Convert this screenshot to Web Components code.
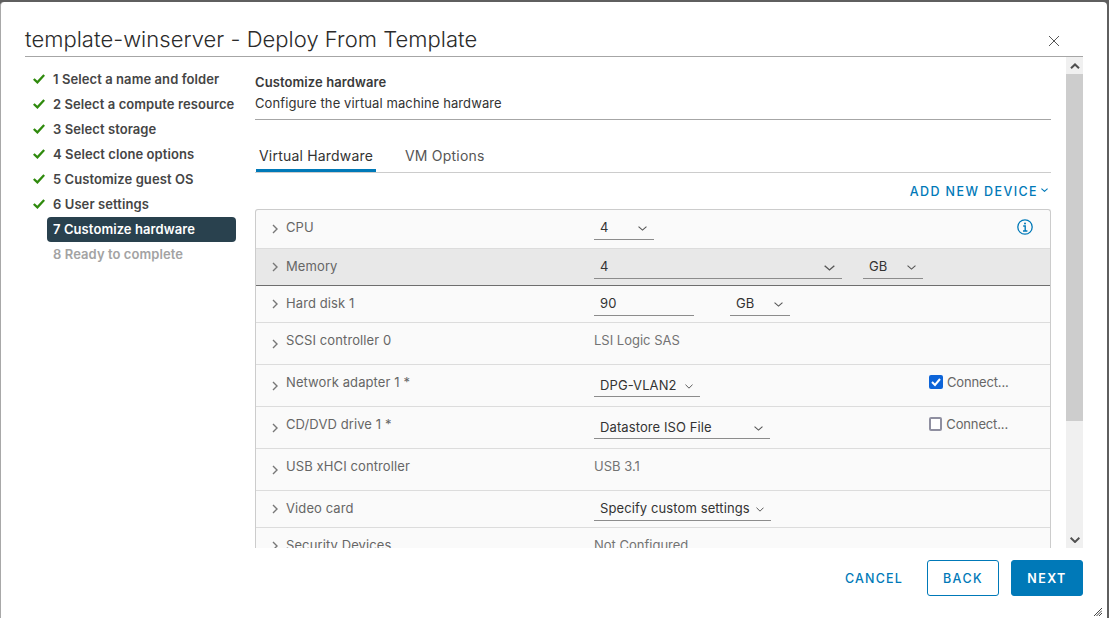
<!DOCTYPE html>
<html>
<head>
<meta charset="utf-8">
<style>
  html, body { margin: 0; height: 100%; }
  body { background: #5f5f5f; overflow: hidden; font-family: Inter, "Noto Sans", sans-serif; letter-spacing: .1px; }
</style>
</head>
<body>
<deploy-dialog heading="template-winserver - Deploy From Template">
  <wizard-steps slot="steps">
    <wizard-step done>1 Select a name and folder</wizard-step>
    <wizard-step done>2 Select a compute resource</wizard-step>
    <wizard-step done>3 Select storage</wizard-step>
    <wizard-step done>4 Select clone options</wizard-step>
    <wizard-step done>5 Customize guest OS</wizard-step>
    <wizard-step done>6 User settings</wizard-step>
    <wizard-step active>7 Customize hardware</wizard-step>
    <wizard-step disabled>8 Ready to complete</wizard-step>
  </wizard-steps>

  <hw-page slot="content">
    <hw-row label="CPU" height="39">
      <hw-select value="4" width="60"></hw-select>
      <info-icon slot="end"></info-icon>
    </hw-row>
    <hw-row label="Memory" height="37" highlight>
      <hw-select value="4" width="248" chev="11"></hw-select>
      <hw-select value="GB" width="60" gap="21"></hw-select>
    </hw-row>
    <hw-row label="Hard disk 1" height="37">
      <hw-select value="90" width="100" plain></hw-select>
      <hw-select value="GB" width="60" gap="36"></hw-select>
    </hw-row>
    <hw-row label="SCSI controller 0" height="42"><span class="ro">LSI Logic SAS</span></hw-row>
    <hw-row label="Network adapter 1 *" height="42" low>
      <hw-select value="DPG-VLAN2" width="106" chev="8"></hw-select>
      <connect-box slot="end" checked></connect-box>
    </hw-row>
    <hw-row label="CD/DVD drive 1 *" height="42" low>
      <hw-select value="Datastore ISO File" width="176"></hw-select>
      <connect-box slot="end"></connect-box>
    </hw-row>
    <hw-row label="USB xHCI controller" height="42"><span class="ro">USB 3.1</span></hw-row>
    <hw-row label="Video card" height="37">
      <hw-select value="Specify custom settings" width="177" chev="8"></hw-select>
    </hw-row>
    <hw-row label="Security Devices" height="37"><span class="ro">Not Configured</span></hw-row>
  </hw-page>
</deploy-dialog>

<script>
const chevron = (w, h, stroke, color) => `
  <svg width="${w}" height="${h}" viewBox="0 0 10 6" preserveAspectRatio="none" fill="none" stroke="${color}" stroke-width="${stroke}">
    <path d="M0.6 0.8 L5 5 L9.4 0.8"/>
  </svg>`;

class DeployDialog extends HTMLElement {
  constructor() {
    super();
    this.shadowDOM = this.attachShadow({ mode: "open" });
  }

  connectedCallback() {
    this.shadowDOM.innerHTML = `
      <style>
        :host {
          display: flex;
          flex-direction: column;
          position: relative;
          box-sizing: border-box;
          height: 616px;
          margin: 2px 2px 0 0;
          border-left: 1px solid #a8a8a8;
          background: #fff;
          border-radius: 4px 4px 0 0;
          color: #333;
        }
        header {
          display: flex;
          justify-content: space-between;
          align-items: flex-end;
          height: 55px;
          margin: 0 24px;
          border-bottom: 1px solid #a6a6a6;
          box-sizing: border-box;
        }
        h1 {
          margin: 0 0 2px;
          font-size: 22px;
          font-weight: 300;
          line-height: 30px;
          letter-spacing: .03px;
          color: #2b2b2b;
          white-space: nowrap;
        }
        .close { margin: 0 24px 10px 0; display: block; }
        .body { display: flex; height: 491px; margin-left: 46px; }
        .steps { width: 189px; padding-top: 10px; box-sizing: border-box; flex: none; }
        .content { width: 828px; margin-left: 19px; flex: none; }
        footer {
          display: flex;
          justify-content: flex-end;
          align-items: center;
          gap: 12px;
          height: 60px;
          margin-right: 24px;
        }
        button {
          height: 36px;
          padding: 0;
          font: 500 12.5px Inter, "Noto Sans", sans-serif;
          letter-spacing: 1.45px;
          color: #0079b8;
          background: none;
          border: 1px solid transparent;
          border-radius: 3px;
        }
        .cancel { width: 84px; margin-right: -1px; letter-spacing: 1.15px; }
        .back { width: 72px; border-color: #0079b8; }
        .next { width: 72px; background: #0079b8; color: #fff; font-weight: 600; border-color: #0079b8; }
        .grip { position: absolute; right: 5px; bottom: 2px; display: block; }
      </style>
      <header>
        <h1>${this.getAttribute("heading")}</h1>
        <svg class="close" width="10" height="10" viewBox="0 0 10 10" stroke="#565656" fill="none">
          <path d="M0 0 L10 10 M10 0 L0 10"/>
        </svg>
      </header>
      <div class="body">
        <div class="steps"><slot name="steps"></slot></div>
        <div class="content"><slot name="content"></slot></div>
      </div>
      <footer>
        <button class="cancel">CANCEL</button>
        <button class="back">BACK</button>
        <button class="next">NEXT</button>
      </footer>
      <svg class="grip" width="8" height="8" viewBox="0 0 8 8" stroke="#444" stroke-width="1" fill="none">
        <path d="M0 8 L8 0 M2.5 8 L8 2.5 M5 8 L8 5"/>
      </svg>
    `;
  }
}

class WizardSteps extends HTMLElement {
  constructor() {
    super();
    this.attachShadow({ mode: "open" }).innerHTML = `
      <style>
        :host { display: flex; flex-direction: column; }
      </style>
      <slot></slot>
    `;
  }
}

class WizardStep extends HTMLElement {
  constructor() {
    super();
    this.attachShadow({ mode: "open" }).innerHTML = `
      <style>
        :host {
          display: block;
          position: relative;
          height: 25px;
          line-height: 25px;
          padding-left: 6px;
          font-size: 13px;
          font-weight: 600;
          letter-spacing: .08px;
          color: #454545;
          white-space: nowrap;
          border-radius: 4px;
        }
        :host([active]) { background: #29414e; color: #fff; }
        :host([disabled]) { color: #a3a3a3; }
        svg { display: none; position: absolute; left: -14px; top: 7px; }
        :host([done]) svg { display: block; }
      </style>
      <svg width="12" height="10" viewBox="0 0 12 10" fill="none" stroke="#2f8a0d" stroke-width="2.3">
        <path d="M0.8 5 L4.4 8.4 L11.2 1"/>
      </svg>
      <slot></slot>
    `;
  }
}

class HwPage extends HTMLElement {
  constructor() {
    super();
    this.attachShadow({ mode: "open" }).innerHTML = `
      <style>
        :host { display: block; position: relative; height: 100%; overflow: hidden; }
        .main { width: 796px; }
        .head { height: 63px; box-sizing: border-box; padding-top: 17px; border-bottom: 1px solid #a6a6a6; font-size: 13px; color: #333; }
        .title { font-weight: 600; line-height: 16px; color: #3a3a3a; }
        .sub { line-height: 16px; margin-top: 5px; font-weight: 400; }
        nav { display: flex; height: 32px; margin-top: 20px; border-bottom: 1px solid #ccc; font-size: 14px; line-height: 32px; letter-spacing: .2px; }
        nav span { padding: 0 4px; color: #565656; }
        nav .on { width: 120px; box-sizing: border-box; height: 32px; margin-left: 1px; padding: 0 0 0 3px; border-bottom: 3px solid #0079b8; color: #333; white-space: nowrap; }
        nav .off { margin-left: 25px; }
        .add {
          display: flex;
          justify-content: flex-end;
          align-items: center;
          gap: 3px;
          height: 36px;
          font-size: 12.5px;
          font-weight: 500;
          letter-spacing: 1.4px;
          color: #0079b8;
          margin-right: 3px;
        }
        .add svg { margin-bottom: 2px; }
        .table {
          border: 1px solid #ccc;
          border-bottom: 0;
          border-radius: 3px 3px 0 0;
          background: #fafafa;
          overflow: hidden;
        }
        .bar {
          position: absolute;
          top: 0;
          right: 0;
          width: 17px;
          height: 100%;
          background: #f0f0f0;
          display: flex;
          flex-direction: column;
        }
        .bar .arrow { height: 17px; display: flex; align-items: center; justify-content: center; flex: none; }
        .bar .thumb { height: 347px; background: #cdcdcd; flex: none; }
        .bar .rest { flex: 1; }
      </style>
      <div class="main">
        <div class="head">
          <div class="title">Customize hardware</div>
          <div class="sub">Configure the virtual machine hardware</div>
        </div>
        <nav><span class="on">Virtual Hardware</span><span class="off">VM Options</span></nav>
        <div class="add">ADD NEW DEVICE ${chevron(7, 4, 1.6, "#0079b8")}</div>
        <div class="table"><slot></slot></div>
      </div>
      <div class="bar">
        <div class="arrow"><svg width="10" height="6" viewBox="0 0 10 6" fill="none" stroke="#505050" stroke-width="2"><path d="M1 5.2 L5 1.4 L9 5.2"/></svg></div>
        <div class="thumb"></div>
        <div class="rest"></div>
        <div class="arrow">${chevron(10, 6, 2, "#505050")}</div>
      </div>
    `;
  }
}

class HwRow extends HTMLElement {
  constructor() {
    super();
    this.attachShadow({ mode: "open" });
  }

  connectedCallback() {
    this.shadowRoot.innerHTML = `
      <style>
        :host {
          display: flex;
          box-sizing: border-box;
          height: ${this.getAttribute("height")}px;
          border-bottom: 1px solid #dcdcdc;
          font-size: 13px;
          color: #666;
          white-space: nowrap;
        }
        :host([highlight]) { background: #e8e8e8; border-bottom-color: #6e6e6e; }
        :host([low]) { --select-height: 20px; }
        .caret { width: 30px; display: flex; align-items: center; justify-content: center; padding-left: 8px; box-sizing: border-box; flex: none; }
        .label { width: 308px; flex: none; padding-top: 9px; line-height: 17px; }
        .value { width: 335px; flex: none; display: flex; align-items: flex-start; padding-top: 9px; line-height: 17px; }
        .end { flex: 1; display: flex; justify-content: flex-end; padding-right: 17px; padding-top: 9px; }
        :host([low]) .value { padding-top: 12px; }
        :host([low]) .end { padding-top: 8px; }
        ::slotted(.ro) { color: #737373; letter-spacing: 0; }
      </style>
      <div class="caret">
        <svg width="6" height="10" viewBox="0 0 6 10" fill="none" stroke="#777" stroke-width="1.4"><path d="M1 1 L5 5 L1 9"/></svg>
      </div>
      <div class="label">${this.getAttribute("label")}</div>
      <div class="value"><slot></slot></div>
      <div class="end"><slot name="end"></slot></div>
    `;
  }
}

class HwSelect extends HTMLElement {
  constructor() {
    super();
    this.attachShadow({ mode: "open" });
  }

  connectedCallback() {
    const gap = this.getAttribute("gap") || 0;
    const chev = Number(this.getAttribute("chev") || 9);
    this.shadowRoot.innerHTML = `
      <style>
        :host {
          display: flex;
          justify-content: space-between;
          align-items: flex-start;
          box-sizing: border-box;
          width: ${this.getAttribute("width")}px;
          height: var(--select-height, 21px);
          margin-left: ${gap}px;
          padding: 0 7px 0 6px;
          border-bottom: 1px solid #8c8c8c;
          color: #333;
          font-size: 13px;
          line-height: 17px;
        }
        svg { margin-top: 7px; }
        :host([plain]) svg { display: none; }
      </style>
      <span>${this.getAttribute("value")}</span>
      ${chevron(chev, chev > 9 ? 6 : 5, 1.2, "#565656")}
    `;
  }
}

class ConnectBox extends HTMLElement {
  constructor() {
    super();
    this.attachShadow({ mode: "open" });
  }

  connectedCallback() {
    const on = this.hasAttribute("checked");
    this.shadowRoot.innerHTML = `
      <style>
        :host { display: flex; align-items: center; gap: 4px; width: 79px; height: 17px; margin-right: 25px; font-size: 13px; letter-spacing: -.15px; color: #666; }
        .box { width: 14px; height: 14px; box-sizing: border-box; border-radius: 2px; border: 2px solid ${on ? "#0d64d8" : "#8f8fa0"}; background: ${on ? "#0d64d8" : "#fff"}; }
        .box svg { display: block; }
      </style>
      <div class="box">${on ? `<svg width="10" height="10" viewBox="0 0 10 10" fill="none" stroke="#fff" stroke-width="2"><path d="M1 5 L4 8 L9 2"/></svg>` : ""}</div>
      <span>Connect...</span>
    `;
  }
}

class InfoIcon extends HTMLElement {
  constructor() {
    super();
    this.attachShadow({ mode: "open" }).innerHTML = `
      <style>
        :host { display: block; width: 16px; height: 16px; }
      </style>
      <svg width="16" height="16" viewBox="0 0 16 16" fill="none" stroke="#0079b8">
        <circle cx="8" cy="8" r="7.2" stroke-width="1.3"/>
        <path d="M6.2 7 H8.2 V12 M6 12 H10.4" stroke-width="1.4"/>
        <circle cx="8" cy="4.4" r="1" fill="#0079b8" stroke="none"/>
      </svg>
    `;
  }
}

customElements.define("deploy-dialog", DeployDialog);
customElements.define("wizard-steps", WizardSteps);
customElements.define("wizard-step", WizardStep);
customElements.define("hw-page", HwPage);
customElements.define("hw-row", HwRow);
customElements.define("hw-select", HwSelect);
customElements.define("connect-box", ConnectBox);
customElements.define("info-icon", InfoIcon);
</script>
</body>
</html>
